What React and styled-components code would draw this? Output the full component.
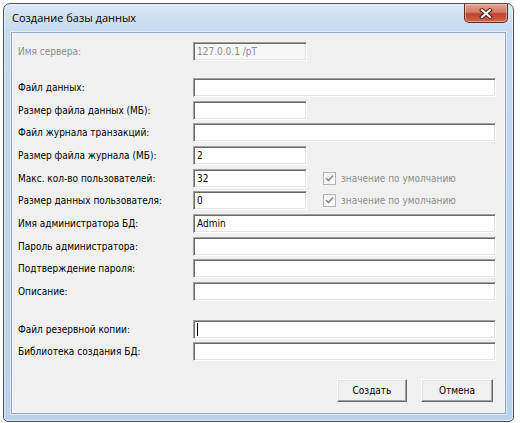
import styled, { createGlobalStyle } from "styled-components";

const GlobalStyle = createGlobalStyle`
  html, body { margin: 0; padding: 0; background: #fff; }
  body {
    font-family: "DejaVu Sans Condensed", "Liberation Sans", Arial, sans-serif;
    font-size: 10px;
    color: #000;
  }
`;

const Window = styled.div`
  margin: 3px 0 0 3px;
  width: 511px;
  height: 419px;
  box-sizing: border-box;
  border: 1px solid #4b5058;
  border-radius: 7px 7px 5px 5px;
  background: linear-gradient(to bottom, #dae7f5 0, #c5d9ef 28px, #bad2eb 100%);
  box-shadow: inset 0 0 0 1px rgba(255, 255, 255, 0.55);
  display: flex;
  flex-direction: column;
  padding: 0 7px 7px 7px;
`;

const TitleBar = styled.div`
  height: 28px;
  flex: none;
  display: flex;
  justify-content: space-between;
  align-items: flex-start;
`;

const Title = styled.div`
  font-family: "Open Sans", "Noto Sans", sans-serif;
  font-size: 11px;
  line-height: 28px;
  color: #000;
  padding-left: 1px;
`;

const CloseButton = styled.div`
  width: 44px;
  height: 19px;
  margin-right: -2px;
  box-sizing: border-box;
  border: 1px solid #6a2a22;
  border-top: none;
  border-radius: 0 0 5px 5px;
  background: linear-gradient(to bottom, #e6a495 0, #d67a66 45%, #bf4330 55%, #d0644b 100%);
  box-shadow: inset 0 0 0 1px rgba(255, 215, 205, 0.5);
  display: flex;
  align-items: center;
  justify-content: center;
`;

const Client = styled.div`
  flex: 1;
  background: #f0f0f0;
  border: 1px solid #95abc6;
  box-shadow: 0 0 0 1px rgba(255, 255, 255, 0.45);
  padding: 9px 9px 10px 6px;
  display: flex;
  flex-direction: column;
`;

const Row = styled.div`
  display: flex;
  align-items: center;
  height: 19px;
  margin-top: ${(p) => p.$gap || 0}px;
`;

const Label = styled.div`
  width: 175px;
  flex: none;
  color: ${(p) => (p.$disabled ? "#8d8d8d" : "#000")};
`;

const Field = styled.div`
  box-sizing: border-box;
  height: 19px;
  width: ${(p) => (p.$short ? "114px" : "auto")};
  flex: ${(p) => (p.$short ? "none" : "1")};
  background: ${(p) => (p.$disabled ? "#f6f6f6" : "#fff")};
  border: 1px solid;
  border-color: #a0a0a0 #fff #fff #a0a0a0;
  box-shadow: inset 1px 1px 0 #696969, inset -1px -1px 0 #e3e3e3;
  padding: 0 3px;
  display: flex;
  align-items: center;
  color: ${(p) => (p.$disabled ? "#8d8d8d" : "#000")};
  white-space: nowrap;
`;

const Caret = styled.span`
  width: 1px;
  height: 13px;
  background: #000;
`;

const DefaultOption = styled.div`
  display: flex;
  align-items: center;
  margin-left: 16px;
  color: #8d8d8d;
  gap: 5px;
`;

const CheckBox = styled.div`
  width: 13px;
  height: 13px;
  box-sizing: border-box;
  border: 1px solid #b4b4b4;
  background: linear-gradient(135deg, #f2f2f2, #fbfbfb);
  display: flex;
  align-items: center;
  justify-content: center;
`;

const Buttons = styled.div`
  display: flex;
  justify-content: flex-end;
  gap: 14px;
  margin-top: 18px;
  padding-right: 3px;
`;

const Button = styled.div`
  width: ${(p) => p.$width}px;
  height: 23px;
  box-sizing: border-box;
  background: #f0f0f0;
  border: 1px solid;
  border-color: #fff #696969 #696969 #fff;
  box-shadow: inset -1px -1px 0 #a0a0a0, inset 1px 1px 0 #e3e3e3;
  display: flex;
  align-items: center;
  justify-content: center;
`;

const CloseGlyph = () => (
  <svg width="14" height="11" viewBox="0 0 14 11">
    <path d="M3 2 L11 9 M11 2 L3 9" stroke="#4a1e17" strokeWidth="4" strokeLinecap="square" />
    <path d="M3 2 L11 9 M11 2 L3 9" stroke="#fff" strokeWidth="2" strokeLinecap="square" />
  </svg>
);

const Check = () => (
  <svg width="9" height="9" viewBox="0 0 9 9">
    <path d="M1 4 L3.5 6.5 L8 1.5" stroke="#8a8a8a" strokeWidth="1.6" fill="none" />
  </svg>
);

const fields = [
  { label: "Файл данных:", gap: 17 },
  { label: "Размер файла данных (МБ):", short: true },
  { label: "Файл журнала транзакций:" },
  { label: "Размер файла журнала (МБ):", short: true, value: "2" },
  { label: "Макс. кол-во пользователей:", short: true, value: "32", option: true },
  { label: "Размер данных пользователя:", short: true, value: "0", option: true },
  { label: "Имя администратора БД:", value: "Admin" },
  { label: "Пароль администратора:" },
  { label: "Подтверждение пароля:" },
  { label: "Описание:" },
];

export default function App() {
  return (
    <>
      <GlobalStyle />
      <Window>
        <TitleBar>
          <Title>Создание базы данных</Title>
          <CloseButton>
            <CloseGlyph />
          </CloseButton>
        </TitleBar>
        <Client>
          <Row>
            <Label $disabled>Имя сервера:</Label>
            <Field $short $disabled>127.0.0.1 /pT</Field>
          </Row>
          {fields.map((f) => (
            <Row key={f.label} $gap={f.gap || 3.67}>
              <Label>{f.label}</Label>
              <Field $short={f.short}>{f.value}</Field>
              {f.option && (
                <DefaultOption>
                  <CheckBox>
                    <Check />
                  </CheckBox>
                  значение по умолчанию
                </DefaultOption>
              )}
            </Row>
          ))}
          <Row $gap={19.5}>
            <Label>Файл резервной копии:</Label>
            <Field>
              <Caret />
            </Field>
          </Row>
          <Row $gap={3}>
            <Label>Библиотека создания БД:</Label>
            <Field />
          </Row>
          <Buttons>
            <Button $width={70}>Создать</Button>
            <Button $width={72}>Отмена</Button>
          </Buttons>
        </Client>
      </Window>
    </>
  );
}
